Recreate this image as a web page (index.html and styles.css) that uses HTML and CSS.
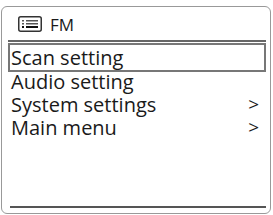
FILE: index.html
```html
<!DOCTYPE html>
<html lang="en">
<head>
    <meta charset="UTF-8">
    <title>FM menu</title>
    <link rel="stylesheet" href="styles.css">
</head>
<body>
    <div class="screen">
        <!-- title bar -->
        <div class="header">
            <svg class="menu-icon" width="24" height="16" viewBox="0 0 24 16">
                <rect x="0.75" y="0.75" width="22.5" height="14.5" rx="2" fill="none" stroke="#333" stroke-width="1.5"/>
                <rect x="4" y="4" width="2" height="1.5" fill="#555"/>
                <rect x="8" y="4" width="12" height="1.5" fill="#555"/>
                <rect x="4" y="7" width="2" height="1.5" fill="#555"/>
                <rect x="8" y="7" width="12" height="1.5" fill="#555"/>
                <rect x="4" y="10" width="2" height="2" fill="#111"/>
                <rect x="8" y="10" width="12" height="2" fill="#111"/>
            </svg>
            <span class="title">FM</span>
        </div>

        <ul class="menu">
            <li class="item selected">Scan setting</li>
            <li class="item">Audio setting</li>
            <li class="item">System settings <span class="arrow">&gt;</span></li>
            <li class="item">Main menu <span class="arrow">&gt;</span></li>
        </ul>

        <div class="footer"></div>
    </div>
</body>
</html>
```

FILE: styles.css
```css
body {
    margin: 0;
    background-color: #fff;
    font-family: "Open Sans", "Liberation Sans", sans-serif;
    color: #1a1a1a;
}

.screen {
    box-sizing: border-box;
    width: 270px;
    height: 208px;
    margin: 6px 0 0 1px;
    padding: 0 4px 5px 6px;
    border: 1px solid #999;
    border-radius: 6px;
    display: flex;
    flex-direction: column;
}

.header {
    height: 33px;
    display: flex;
    align-items: center;
    gap: 8px;
    padding-left: 10px;
    border-bottom: 2px solid #666;
}

.menu-icon {
    display: block;
    margin-top: 1px;
}

.title {
    font-size: 17px;
    line-height: 1;
    margin-top: 2px;
}

.menu {
    list-style: none;
    margin: 4px 0 0;
    padding: 0;
}

.item {
    display: flex;
    justify-content: space-between;
    margin: 0 3px;
    padding-right: 4px;
    font-size: 20px;
    line-height: 23px;
    height: 23px;
}

.item.selected {
    outline: 2px solid #777;
    outline-offset: 1px;
    margin-bottom: 1px;
}

.arrow {
    font-size: 19px;
}

.footer {
    margin: auto 0 0 2px;
    border-bottom: 2px solid #555;
}
```
